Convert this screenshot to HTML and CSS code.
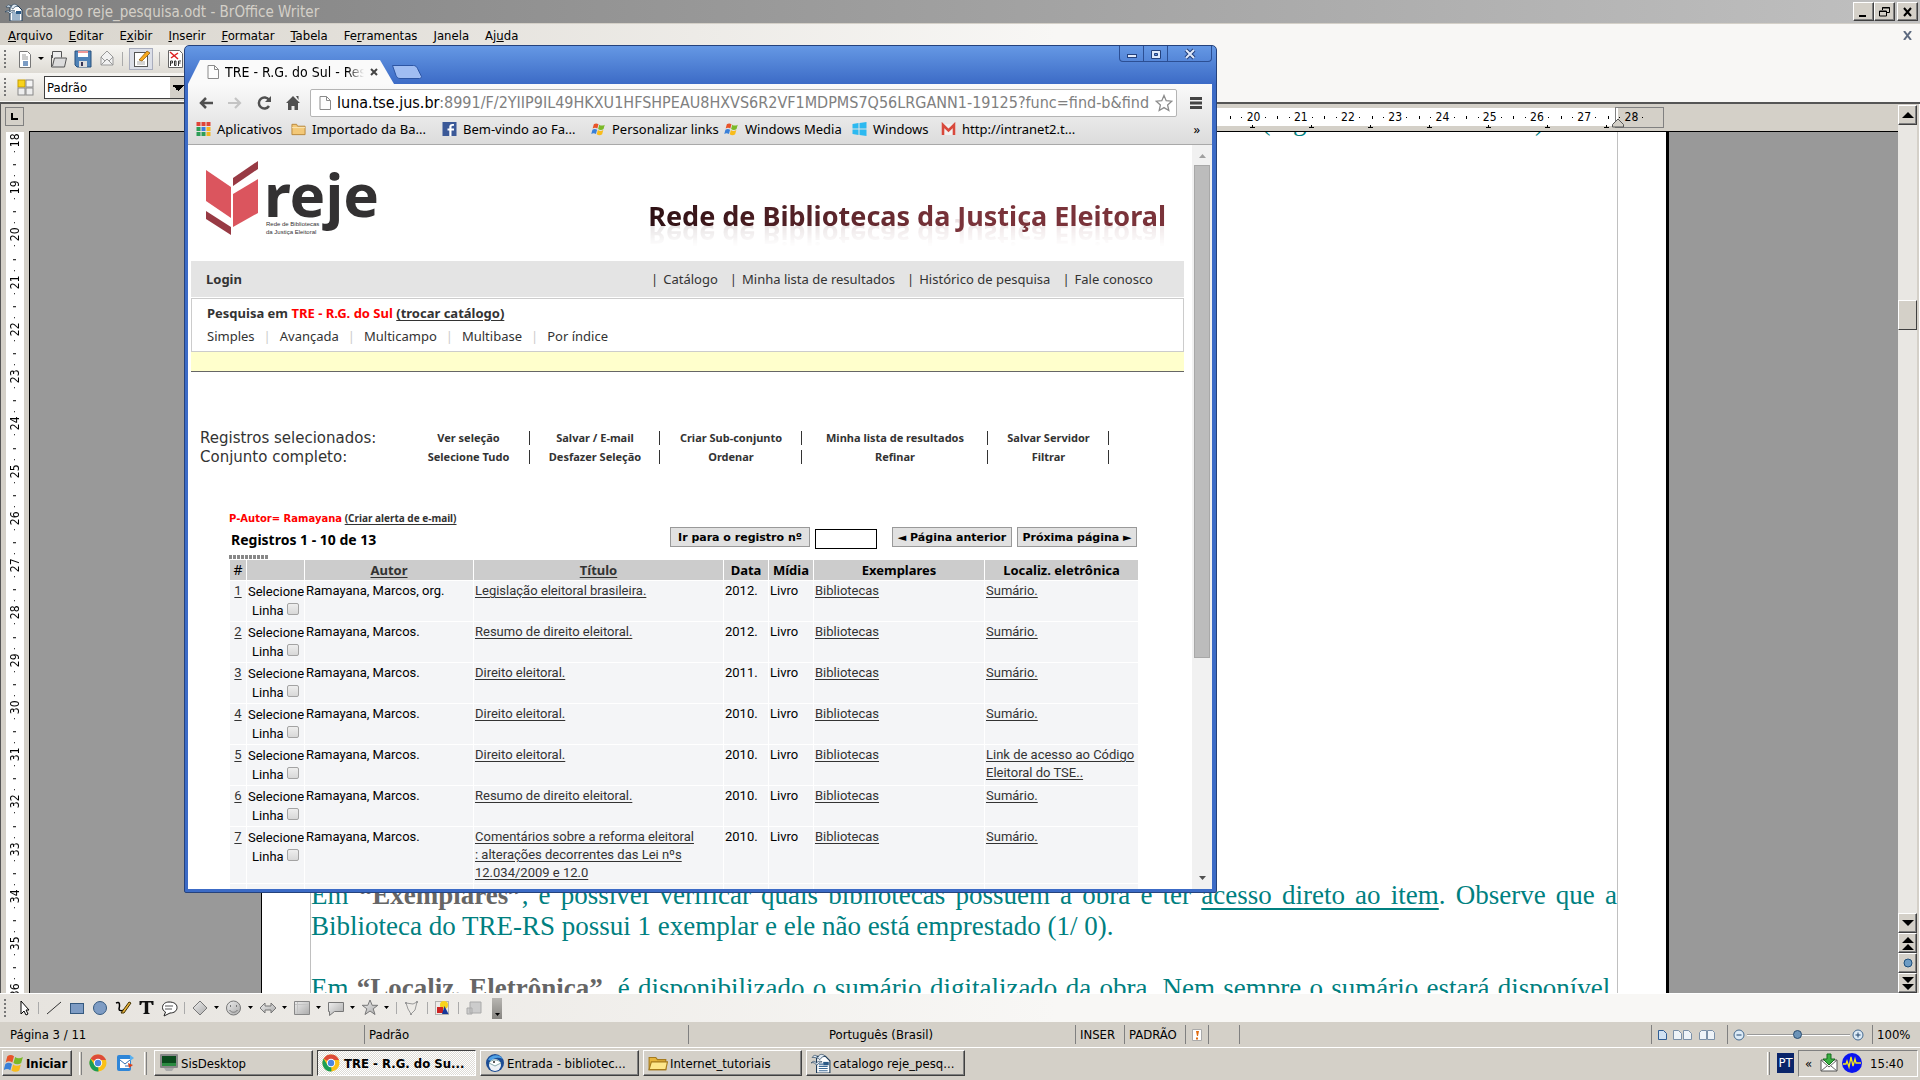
FILE: index.html
```html
<!DOCTYPE html>
<html lang="pt-BR">
<head>
<meta charset="utf-8">
<title>catalogo reje_pesquisa.odt - BrOffice Writer</title>
<link rel="stylesheet" href="styles.css">
</head>
<body>
<svg class="defs" aria-hidden="true">
  <symbol id="i-odt" viewBox="0 0 18 18"><path d="M5 3h8l4 4v11H5z" fill="#fff" stroke="#1d3b58"/><path d="M7 10h4M7 12h8M7 14h8M7 16h8" stroke="#3c6a96"/><rect x="11" y="8" width="5" height="3" fill="#2c5a86"/><path d="M1 4c2-3 4-2 5 0 2-4 5-3 7-1-2 0-4 1-5 3C6 4 3 4 1 4z" fill="#dfe9f2" stroke="#1d3b58" stroke-width=".6"/><path d="M0 9c2-2 3-2 5 0 1-2 3-2 5-1-3 0-3 2-5 3-1-2-3-3-5-2z" fill="#dfe9f2" stroke="#1d3b58" stroke-width=".6"/></symbol>
  <symbol id="i-page" viewBox="0 0 12 14"><path d="M1 .5h6.500L11.500 4.500v9H1z" fill="#fdfdfd" stroke="#8a8a8a"/><path d="M7.500.5v4h4" fill="none" stroke="#8a8a8a"/></symbol>
  <symbol id="i-chrome" viewBox="0 0 18 18"><circle cx="9" cy="9" r="8.500" fill="#fbc116"/><path d="M9 9L1.600 4.750A8.500 8.500 0 0 1 16.400 4.750L17 6H9z" fill="#dd4b39"/><path d="M9 9L9.500 17.500A8.500 8.500 0 0 1 1.600 4.750L5.500 11z" fill="#1b9e55"/><circle cx="9" cy="9" r="4.200" fill="#fff"/><circle cx="9" cy="9" r="3.200" fill="#4b86e0"/></symbol>
  <symbol id="i-flag" viewBox="0 0 18 18"><path d="M3 3c2-1.500 4-1.500 6 0L7.500 8.500c-2-1.500-4-1.500-6 0z" fill="#e8542a"/><path d="M10 3.500c2 1.500 4.500 1.500 7 0L15.500 9c-2 1.500-5 1.500-7 0z" fill="#7bb928"/><path d="M1.200 10c2-1.500 4-1.500 6 0L5.700 15.500c-2-1.500-4-1.500-6 0z" fill="#3a80d8"/><path d="M8.200 10.300c2 1.500 4.500 1.500 7 0l-1.500 5.500c-2 1.500-5 1.500-7 0z" fill="#f8bc1c"/></symbol>
  <symbol id="i-folder" viewBox="0 0 18 16"><path d="M1 3h6l1.500 2H16v9H1z" fill="#e6b53c" stroke="#a57a1c"/><path d="M1 14L3 7h14.500L16 14z" fill="#fde68a" stroke="#a57a1c"/></symbol>
</svg>

<header class="titlebar">
  <svg class="ico18"><use href="#i-odt"/></svg>
  <h1>catalogo reje_pesquisa.odt - BrOffice Writer</h1>
  <div class="winbtns">
    <button aria-label="Minimizar"><svg viewBox="0 0 16 14"><path d="M3 11h7" stroke="#000" stroke-width="2"/></svg></button>
    <button aria-label="Restaurar"><svg viewBox="0 0 16 14"><path d="M5.500 5V2.500h7v5H10M5 3h8" fill="none" stroke="#000"/><path d="M2.500 6h7v5h-7zM2 6.500h8" fill="none" stroke="#000"/></svg></button>
    <button class="gap" aria-label="Fechar"><svg viewBox="0 0 16 14"><path d="M4 3l7 8M11 3l-7 8" stroke="#000" stroke-width="2"/></svg></button>
  </div>
</header>

<nav class="menubar">
  <a href="#"><u>A</u>rquivo</a><a href="#"><u>E</u>ditar</a><a href="#">E<u>x</u>ibir</a><a href="#"><u>I</u>nserir</a><a href="#"><u>F</u>ormatar</a><a href="#"><u>T</u>abela</a><a href="#">Fe<u>r</u>ramentas</a><a href="#"><u>J</u>anela</a><a href="#">Aj<u>u</u>da</a>
  <button class="docclose" aria-label="Fechar documento"><svg viewBox="0 0 9 9"><path d="M1 0l7 9M8 0L1 9" stroke="#5e6b80" stroke-width="2"/></svg></button>
</nav>

<div class="toolbars">
  <div class="toolbar">
    <span class="grip"></span>
    <svg class="tb-new" viewBox="0 0 28 20"><path d="M2.500 2.500h8l3 3v13h-11z" fill="#fff" stroke="#777"/><path d="M5 6h4M5 8h6M5 10h6" stroke="#999"/><rect x="6" y="12" width="5" height="5" fill="#7b9cc4"/><path d="M21 8h6l-3 3z" fill="#000"/></svg>
    <svg viewBox="0 0 18 20"><path d="M2.500 9V2.500h9v6" fill="#eee" stroke="#555"/><path d="M1.500 6v12h13l2-9h-12l-2 8" fill="#dcdcdc" stroke="#555"/></svg>
    <svg viewBox="0 0 18 20"><path d="M1 2h16v16H3l-2-2z" fill="#4f83b8" stroke="#28517c"/><rect x="4" y="2" width="10" height="6" fill="#fff"/><path d="M4 3h10" stroke="#d33"/><rect x="5" y="12" width="8" height="6" fill="#ddd"/><rect x="7" y="13" width="2" height="4" fill="#335"/></svg>
    <svg viewBox="0 0 18 20"><path d="M3 8l6-6 6 6v8H3z" fill="#f1f1f1" stroke="#999"/><path d="M3 16l6-6 6 6M3 8l4 4M15 8l-4 4" fill="none" stroke="#999"/></svg>
    <span class="sep"></span>
    <span class="pressed"><svg viewBox="0 0 18 20"><rect x="2.500" y="3.500" width="13" height="14" fill="#fff" stroke="#555"/><path d="M5 13h8M5 15h8" stroke="#aaa"/><path d="M7 11l8-9 3 2-8 8z" fill="#f7a81c" stroke="#8a5200" stroke-width=".7"/></svg></span>
    <span class="sep"></span>
    <svg viewBox="0 0 18 20"><path d="M2.500 1.500h11l3 3v14h-14z" fill="#fff" stroke="#666"/><path d="M4 3l8 7M12 4L5 9" stroke="#d22" stroke-width="1.500"/><path d="M4.500 17v-5h2v2h-2M8.500 12v4.500h1.500V12zM12.500 17v-5h2.500M12.500 14h2" fill="none" stroke="#333"/></svg>
  </div>
  <div class="toolbar">
    <span class="grip"></span>
    <svg class="tb-style" viewBox="0 0 18 20"><rect x="1" y="3" width="7" height="7" fill="#f8d31c" stroke="#c59d00"/><rect x="9" y="3" width="7" height="7" fill="#f4f4f4" stroke="#888"/><rect x="1" y="11" width="7" height="7" fill="#eee" stroke="#888"/><rect x="9" y="11" width="7" height="7" fill="#eee" stroke="#888"/></svg>
    <label class="combo" for="style"><span class="sr">Estilo</span><select id="style"><option>Padrão</option></select></label>
  </div>
</div>

<main class="work">
  <div class="canvas">
    <div class="hruler">
      <button class="corner" aria-label="Tipo de tabulação"><svg viewBox="0 0 7 7"><path d="M1 0v6h6" fill="none" stroke="#000" stroke-width="2"/></svg></button>
      <div class="hscale"><ol><li>20</li><li>21</li><li>22</li><li>23</li><li>24</li><li>25</li><li>26</li><li>27</li><li>28</li></ol>
        <svg class="indent" viewBox="0 0 14 10"><path d="M7 1l5.500 5.500v2.500h-11V6.500z" fill="#d4d0c8" stroke="#555"/></svg></div>
    </div>
    <div class="body">
      <div class="vruler"><ol><li>18</li><li>19</li><li>20</li><li>21</li><li>22</li><li>23</li><li>24</li><li>25</li><li>26</li><li>27</li><li>28</li><li>29</li><li>30</li><li>31</li><li>32</li><li>33</li><li>34</li><li>35</li><li>36</li></ol></div>
      <div class="desk">
        <article class="sheet">
          <div class="text">
            <p class="top"><span>página</span><span>(Figura</span><span class="end">)</span></p>
            <div>
              <p>Em <b>“Exemplares”</b>, é possível verificar quais bibliotecas possuem a obra e ter <u>acesso direto ao item</u>. Observe que a Biblioteca do TRE-RS possui 1 exemplar e ele não está emprestado (1/ 0).</p>
              <p class="full">Em <b>“Localiz. Eletrônica”</b>, é disponibilizado o sumário digitalizado da obra. Nem sempre o sumário estará disponível,</p>
            </div>
          </div>
        </article>
      </div>
    </div>
  </div>
  <div class="vscroll">
    <button aria-label="Para cima"><svg viewBox="0 0 12 6"><path d="M6 0l6 6H0z"/></svg></button>
    <div class="track"><span class="thumb"></span></div>
    <button aria-label="Para baixo"><svg viewBox="0 0 12 6"><path d="M6 6l6-6H0z"/></svg></button>
    <button aria-label="Página anterior"><svg viewBox="0 0 12 13"><path d="M6 0l6 6H0zM6 7l6 6H0z"/></svg></button>
    <button aria-label="Navegação"><svg viewBox="0 0 12 12"><circle cx="6" cy="6" r="4" fill="#6d9cc4" stroke="#1d4f7c"/></svg></button>
    <button aria-label="Próxima página"><svg viewBox="0 0 12 13"><path d="M6 6l6-6H0zM6 13l6-6H0z"/></svg></button>
  </div>
</main>

<div class="drawbar">
  <span class="grip"></span>
  <svg class="draw" viewBox="0 0 500 28" preserveAspectRatio="xMinYMid">
    <defs><linearGradient id="g" x1="0" y1="0" x2="1" y2="1"><stop offset="0" stop-color="#eee"/><stop offset="1" stop-color="#aaa"/></linearGradient></defs>
    <path d="M21 7v13l3-3 2 4 2-1-2-4h3z" fill="#fff" stroke="#000"/>
    <path d="M47 20L61 8" stroke="#333"/>
    <rect x="70.500" y="9.500" width="13" height="10" fill="#7e9cc4" stroke="#35597f"/>
    <circle cx="100" cy="14" r="6.500" fill="#7e9cc4" stroke="#35597f"/>
    <path d="M116 9c4-2 4 2 3 6 0 2 3 2 5 1" fill="none" stroke="#000" stroke-width="1.500"/><path d="M121 19l8-11 2 1-7 10z" fill="#e8b23a" stroke="#403000"/>
    <path d="M139.500 7v4h1.500l1-2.500h2.800v10l-2 1.500h7.400l-2-1.500v-10h2.800l1 2.500h1.500V7z" fill="#111"/>
    <path d="M169 8c5 0 8 2 8 5.500s-3 5.500-7 5.500l-6 3 1.500-4c-2-1-3-2.500-3-4.500 0-3.500 3-5.500 6.500-5.500z" fill="#fff" stroke="#222"/><path d="M165 12h8M165 15h7" stroke="#555"/>
    <path d="M200 7l7 7-7 7-7-7z" fill="url(#g)" stroke="#777"/>
    <circle cx="233.500" cy="14" r="7" fill="url(#g)" stroke="#777"/><path d="M230.500 11v2M236.500 11v2M229.500 16c2 3 6 3 8 0" stroke="#777" fill="none"/>
    <path d="M260 14l5-5v3h6V9l5 5-5 5v-3h-6v3z" fill="url(#g)" stroke="#777"/>
    <path d="M294.500 7.500h15v13h-15z" fill="url(#g)" stroke="#888"/><path d="M297.500 8v12M295 10.500h14" stroke="#c4c4c4"/>
    <path d="M328.500 8.500h15v9h-9l-5 4v-4h-1z" fill="url(#g)" stroke="#777"/>
    <path d="M370 6l2.200 5.300h5.600l-4.600 3.500 1.800 5.700-5-3.500-5 3.500 1.800-5.700-4.600-3.500h5.600z" fill="url(#g)" stroke="#777"/>
    <path d="M406 9l7 1 4-2-2 8-4 4-3-5z" fill="none" stroke="#999"/><path d="M405 8h2v2h-2zM416 7h2v2h-2zM410 19h2v2h-2z" fill="#999"/>
    <rect x="435.500" y="7.500" width="13" height="13" fill="none" stroke="#777" stroke-dasharray="1 1"/><circle cx="444" cy="11" r="4" fill="#f8d31c"/><rect x="437" y="13" width="6" height="6" fill="#c22"/><path d="M442 20l2.500-8 4 8z" fill="#16389a"/>
    <path d="M470 8h11v11h-11zM467 14h5v6h-5z" fill="#ccc" stroke="#aaa"/>
    <path d="M214 12h5l-2.500 3zM248 12h5l-2.500 3zM282 12h5l-2.500 3zM316 12h5l-2.500 3zM350 12h5l-2.500 3zM384 12h5l-2.500 3z"/>
    <path d="M38.500 8v12M184.500 8v12M396.500 8v12M427.500 8v12M458.500 8v12" stroke="#aaa"/>
  </svg>
  <button class="more" aria-label="Mais botões"><svg viewBox="0 0 5 3"><path d="M0 0h5L2.500 3z"/></svg></button>
</div>

<footer class="status">
  <span class="s1">Página 3 / 11</span><span class="s2">Padrão</span><span class="s3">Português (Brasil)</span><span class="s4">INSER</span><span class="s5">PADRÃO</span>
  <span class="s6"><svg class="ico14" viewBox="0 0 14 14"><path d="M2.500 1.500h9v11h-9z" fill="#fff" stroke="#aaa"/><path d="M6 3h3l-1 5H7zM6 9.500h2v2H6z" fill="#e06c10"/></svg></span><span class="s7"></span><span class="s8"></span>
  <span class="views"><svg viewBox="0 0 62 14"><path d="M2.500 2.500h5l3 3v6h-8z" fill="#cfe0f2" stroke="#2f5d94"/><path d="M17.500 2.500h5l3 3v6h-8zM27.500 2.500h5l3 3v6h-8zM43.500 4.500l2-2h5v9h-7zM51.500 2.500h5l2 2v7h-7z" fill="#eef3f8" stroke="#7b90a8"/></svg></span>
  <span class="zoom">
    <svg class="ico14" viewBox="0 0 14 14"><circle cx="7" cy="7" r="5" fill="#dceaf6" stroke="#44698f"/><path d="M4.500 7h5" stroke="#22476e"/></svg>
    <label class="sr" for="z">Zoom</label><input id="z" type="range" min="20" max="180" value="98">
    <svg class="ico14" viewBox="0 0 14 14"><circle cx="7" cy="7" r="5" fill="#dceaf6" stroke="#44698f"/><path d="M4.500 7h5M7 4.500v5" stroke="#22476e"/></svg>
  </span>
  <span class="pct">100%</span>
</footer>

<nav class="taskbar">
  <button class="start"><svg class="ico20"><use href="#i-flag"/></svg>Iniciar</button>
  <span class="tsep"></span>
  <a class="ql" href="#" aria-label="Chrome"><svg class="ico18"><use href="#i-chrome"/></svg></a>
  <a class="ql" href="#" aria-label="Outlook"><svg class="ico20" viewBox="0 0 20 20"><rect x="2" y="2" width="14" height="16" rx="2" fill="#2f86d8"/><rect x="5" y="6" width="10" height="9" fill="#fff"/><path d="M5 7l5 4 5-4M10 13h6" fill="none" stroke="#2f6cb0"/><path d="M15 2l4 3-4 3z" fill="#58b0f0"/><path d="M13 10l5 2-4 3z" fill="#d8401c"/></svg></a>
  <span class="tsep"></span>
  <div class="tasks">
    <button><svg class="ico20" viewBox="0 0 20 20"><rect x="1" y="1" width="18" height="14" rx="1" fill="#888"/><rect x="3" y="3" width="14" height="10" fill="#0a4a1c"/><path d="M3 10h14v3H3z" fill="#2a8a40"/><path d="M5 15h10l-2 3H7z" fill="#aaa"/></svg>SisDesktop</button>
    <button class="on"><svg class="ico18"><use href="#i-chrome"/></svg>TRE - R.G. do Su...</button>
    <button><svg class="ico20" viewBox="0 0 20 20"><circle cx="10" cy="10" r="9" fill="#1c4c94"/><path d="M3 7c3-6 12-6 15-1-4-2-9-2-11 2z" fill="#4fa0e4"/><circle cx="10" cy="12" r="6" fill="#eef2f6"/><path d="M4 10c3-4 9-4 12 0l-6 3z" fill="#fff" stroke="#8aa"/><circle cx="9" cy="9" r="1" fill="#222"/></svg>Entrada - bibliotec...</button>
    <button><svg class="ico20"><use href="#i-folder"/></svg>Internet_tutoriais</button>
    <button><svg class="ico20"><use href="#i-odt"/></svg>catalogo reje_pesq...</button>
  </div>
  <span class="tsep"></span>
  <span class="lang">PT</span>
  <div class="tray"><span class="chev">«</span><svg class="ico20" viewBox="0 0 20 20"><path d="M2 7h16v11H2z" fill="#fff" stroke="#555"/><path d="M2 7l8 7 8-7M2 18l6-5M18 18l-6-5" fill="none" stroke="#666"/><path d="M8 1h4v5h4l-6 6-6-6h4z" fill="#3cb043" stroke="#156c1e"/></svg><svg class="ico20" viewBox="0 0 20 20"><circle cx="10" cy="10" r="10" fill="#0a14f0"/><path d="M1 11h3l1-3 2 6 2-10 2 9 2-7 1 4h5" fill="none" stroke="#f6e71c" stroke-width="1.300"/></svg><time>15:40</time></div>
</nav>

<section class="chrome">
  <div class="strip">
    <div class="tab"><svg class="pageico"><use href="#i-page"/></svg><span>TRE - R.G. do Sul - Resultados</span><button aria-label="Fechar guia"><svg viewBox="0 0 8 8"><path d="M1 1l6 6M7 1L1 7" stroke="#444" stroke-width="2"/></svg></button></div>
    <button class="newtab" aria-label="Nova guia"><svg viewBox="0 0 32 16"><path d="M1.500 1.500h21c2 0 3 1 4 3l4 8c0 1-1 2-2 2H9c-2 0-3-1-4-3z" fill="#a0bdf2" stroke="#2c55a4"/></svg></button>
    <div class="cbtns">
      <button aria-label="Minimizar"><svg viewBox="0 0 14 12"><rect x="2.500" y="6.500" width="9" height="3" fill="#dfe9fb" stroke="#24417c"/></svg></button>
      <button aria-label="Maximizar"><svg viewBox="0 0 14 12"><path d="M2.500 2.500h9v8h-9zM5.500 5.500h3v2h-3z" fill="#dfe9fb" fill-rule="evenodd" stroke="#24417c"/></svg></button>
      <button class="wide" aria-label="Fechar"><svg viewBox="0 0 14 12"><path d="M3 2l8 8M11 2l-8 8" stroke="#24417c" stroke-width="4"/><path d="M3 2l8 8M11 2l-8 8" stroke="#dfe9fb" stroke-width="2"/></svg></button>
    </div>
  </div>
  <div class="ctools">
    <div class="addr">
      <button aria-label="Voltar"><svg viewBox="0 0 16 16"><path d="M15 8H3M8 3L3 8l5 5" fill="none" stroke="#505050" stroke-width="2.500"/></svg></button>
      <button aria-label="Avançar"><svg viewBox="0 0 16 16"><path d="M1 8h12M8 3l5 5-5 5" fill="none" stroke="#c4c4c4" stroke-width="2.200"/></svg></button>
      <button aria-label="Recarregar"><svg viewBox="0 0 16 16"><path d="M13 11a5.500 5.500 0 1 1 0-6" fill="none" stroke="#505050" stroke-width="2.500"/><path d="M15 1v6H9z" fill="#505050"/></svg></button>
      <button aria-label="Página inicial"><svg viewBox="0 0 16 16"><path d="M8 1l7 7h-2v7H9.500v-4h-3v4H3V8H1zM11 1h2.500v4z" fill="#505050"/></svg></button>
      <div class="url"><svg class="pageico"><use href="#i-page"/></svg><span class="urltext"><b>luna.tse.jus.br</b>:8991/F/2YIIP9IL49HKXU1HFSHPEAU8HXVS6R2VF1MDPMS7Q56LRGANN1-19125?func=find-b&amp;find</span><svg class="ico18" viewBox="0 0 18 18"><path d="M9 1.500l2.200 5.200 5.600.5-4.200 3.700 1.200 5.600L9 13.600l-4.800 2.900 1.200-5.600L1.200 7.200l5.600-.5z" fill="#fff" stroke="#8c8c8c" stroke-width="1.300"/></svg></div>
      <button aria-label="Menu"><svg viewBox="0 0 16 16"><path d="M2 3.500h12M2 8h12M2 12.500h12" stroke="#444" stroke-width="3"/></svg></button>
    </div>
    <nav class="marks">
      <a class="m1" href="#"><svg viewBox="0 0 14 14"><path d="M0 0h4v4H0zM5 0h4v4H5zM10 0h4v4h-4z" fill="#e0453a"/><path d="M0 5h4v4H0zM0 10h4v4H0zM5 10h4v4H5z" fill="#2e9e58"/><path d="M5 5h4v4H5z" fill="#3a7de0"/><path d="M10 5h4v4h-4zM10 10h4v4h-4z" fill="#f2b620"/></svg>Aplicativos</a>
      <a class="m2" href="#"><svg viewBox="0 0 16 14"><path d="M1 2h5l1 2h8v9H1z" fill="#f3c877" stroke="#b8863a"/><path d="M1 5.500h14" stroke="#fbe6b8"/></svg>Importado da Ba...</a>
      <a class="m3" href="#"><svg viewBox="0 0 14 14"><rect width="14" height="14" fill="#3b5998"/><path d="M9 14V8.500h2.500V6.500H9V5c0-1 .5-1.200 2.500-1.200V2C8 1.500 6.800 3 6.800 4.800v1.700H5v2h1.800V14z" fill="#fff"/></svg>Bem-vindo ao Fa...</a>
      <a class="m4" href="#"><svg><use href="#i-flag"/></svg>Personalizar links</a>
      <a class="m5" href="#"><svg><use href="#i-flag"/></svg>Windows Media</a>
      <a class="m6" href="#"><svg viewBox="0 0 14 14"><path d="M0 2l6-1v5.500H0zM7 1l7-1v6.500H7zM0 7.500h6V13l-6-1zM7 7.500h7V14l-7-1z" fill="#2cb9f0"/></svg>Windows</a>
      <a class="m7" href="#"><svg viewBox="0 0 14 14"><path d="M0 2h14v11H0z" fill="#f0f0f0"/><path d="M1.500 13V3L7 8.500 12.500 3v10" fill="none" stroke="#d8493c" stroke-width="2.600"/></svg>http://intranet2.t...</a>
      <button class="over" aria-label="Mais favoritos">»</button>
    </nav>
  </div>
  <div class="view">
    <div class="site">
      <div class="brand">
        <svg class="logo" viewBox="0 0 176 80" role="img" aria-label="reje">
          <path d="M0 9l25 17v31L0 40z" fill="#db555e"/><path d="M52 18v34L27 66V33z" fill="#db555e"/><path d="M52 0v8L27 25v-8z" fill="#983a44"/><path d="M0 50l25 16v8L0 58z" fill="#983a44"/>
          <text class="lg" x="58" y="56">reje</text><text class="sm" x="60" y="65">Rede de Bibliotecas</text><text class="sm" x="60" y="73">da Justiça Eleitoral</text>
        </svg>
        <h2>Rede de Bibliotecas da Justiça Eleitoral</h2>
      </div>
      <nav class="grey"><a href="#"><b>Login</b></a><span class="links"><a href="#">Catálogo</a><a href="#">Minha lista de resultados</a><a href="#">Histórico de pesquisa</a><a href="#">Fale conosco</a></span></nav>
      <div class="search">
        <p><b>Pesquisa em <em>TRE - R.G. do Sul</em> <a href="#">(trocar catálogo)</a></b></p>
        <nav><a href="#">Simples</a><a href="#">Avançada</a><a href="#">Multicampo</a><a href="#">Multibase</a><a href="#">Por índice</a></nav>
      </div>
      <div class="yellow"></div>
      <table class="actions">
        <tr><th scope="row">Registros selecionados:</th><td class="a1"><a href="#">Ver seleção</a></td><td class="a2"><a href="#">Salvar / E-mail</a></td><td class="a3"><a href="#">Criar Sub-conjunto</a></td><td class="a4"><a href="#">Minha lista de resultados</a></td><td class="a5"><a href="#">Salvar Servidor</a></td></tr>
        <tr><th scope="row">Conjunto completo:</th><td><a href="#">Selecione Tudo</a></td><td><a href="#">Desfazer Seleção</a></td><td><a href="#">Ordenar</a></td><td><a href="#">Refinar</a></td><td><a href="#">Filtrar</a></td></tr>
      </table>
      <div class="results">
        <p class="alert"><em>P-Autor= Ramayana</em> <a href="#">(Criar alerta de e-mail)</a></p>
        <form class="pager"><strong>Registros 1 - 10 de 13</strong>
          <button type="button">Ir para o registro nº</button><input type="text" aria-label="Registro nº">
          <button type="button" class="prev">◄ Página anterior</button><button type="button">Próxima página ►</button></form>
        <div class="zig"></div>
        <table class="grid">
          <colgroup><col class="c1"><col class="c2"><col class="c3"><col class="c4"><col class="c5"><col class="c6"><col class="c7"><col class="c8"></colgroup>
          <thead><tr><th class="n">#</th><th></th><th><a href="#">Autor</a></th><th><a href="#">Título</a></th><th>Data</th><th>Mídia</th><th>Exemplares</th><th>Localiz. eletrônica</th></tr></thead>
          <tbody>
            <tr><td><a href="#">1</a></td><td><label>Selecione Linha <input type="checkbox"></label></td><td>Ramayana, Marcos, org.</td><td><a href="#">Legislação eleitoral brasileira.</a></td><td>2012.</td><td>Livro</td><td><a href="#">Bibliotecas</a></td><td><a href="#">Sumário.</a></td></tr>
            <tr><td><a href="#">2</a></td><td><label>Selecione Linha <input type="checkbox"></label></td><td>Ramayana, Marcos.</td><td><a href="#">Resumo de direito eleitoral.</a></td><td>2012.</td><td>Livro</td><td><a href="#">Bibliotecas</a></td><td><a href="#">Sumário.</a></td></tr>
            <tr><td><a href="#">3</a></td><td><label>Selecione Linha <input type="checkbox"></label></td><td>Ramayana, Marcos.</td><td><a href="#">Direito eleitoral.</a></td><td>2011.</td><td>Livro</td><td><a href="#">Bibliotecas</a></td><td><a href="#">Sumário.</a></td></tr>
            <tr><td><a href="#">4</a></td><td><label>Selecione Linha <input type="checkbox"></label></td><td>Ramayana, Marcos.</td><td><a href="#">Direito eleitoral.</a></td><td>2010.</td><td>Livro</td><td><a href="#">Bibliotecas</a></td><td><a href="#">Sumário.</a></td></tr>
            <tr><td><a href="#">5</a></td><td><label>Selecione Linha <input type="checkbox"></label></td><td>Ramayana, Marcos.</td><td><a href="#">Direito eleitoral.</a></td><td>2010.</td><td>Livro</td><td><a href="#">Bibliotecas</a></td><td><a href="#">Link de acesso ao Código<br>Eleitoral do TSE..</a></td></tr>
            <tr><td><a href="#">6</a></td><td><label>Selecione Linha <input type="checkbox"></label></td><td>Ramayana, Marcos.</td><td><a href="#">Resumo de direito eleitoral.</a></td><td>2010.</td><td>Livro</td><td><a href="#">Bibliotecas</a></td><td><a href="#">Sumário.</a></td></tr>
            <tr><td><a href="#">7</a></td><td><label>Selecione Linha <input type="checkbox"></label></td><td>Ramayana, Marcos.</td><td><a href="#">Comentários sobre a reforma eleitoral<br>: alterações decorrentes das Lei nºs<br>12.034/2009 e 12.0</a></td><td>2010.</td><td>Livro</td><td><a href="#">Bibliotecas</a></td><td><a href="#">Sumário.</a></td></tr>
            <tr><td></td><td></td><td></td><td></td><td></td><td></td><td></td><td></td></tr>
          </tbody>
        </table>
      </div>
    </div>
    <div class="cscroll"><svg viewBox="0 0 7 4"><path d="M3.500 0L7 4H0z" fill="#a0a0a0"/></svg><div class="ctrack"><span></span></div><svg viewBox="0 0 7 4"><path d="M3.500 4L7 0H0z" fill="#505050"/></svg></div>
  </div>
</section>
</body>
</html>
```
FILE: styles.css
```css
* { box-sizing: border-box; }
:root { --ui: "DejaVu Sans Condensed", "Noto Sans", sans-serif; --web: "Noto Sans", sans-serif; --face: #d4d0c8; }
body { margin: 0; height: 100vh; display: flex; flex-direction: column; position: relative; overflow: hidden; background: var(--face); font: 13px var(--ui); color: #000; }
a { color: inherit; text-decoration: none; }
button { padding: 0; margin: 0; font: inherit; color: inherit; border: 0; background: none; }
h1, h2, p, ol { margin: 0; padding: 0; font: inherit; }
ol { list-style: none; }
.defs { position: absolute; width: 0; height: 0; }
.sr { position: absolute; width: 1px; height: 1px; overflow: hidden; clip-path: inset(50%); }
.ico14 { width: 14px; height: 14px; }
.ico18 { width: 18px; height: 18px; flex: none; }
.ico20 { width: 20px; height: 20px; flex: none; }
.pageico { width: 12px; height: 14px; flex: none; }

/* Writer frame */
.titlebar { height: 24px; flex: none; display: flex; align-items: center; gap: 2px; padding: 0 2px 0 5px; border-bottom: 1px solid #d4d0c8; background: linear-gradient(90deg, #808080, #c0c0c0); }
.titlebar h1 { flex: 1; font-size: 15px; color: #d4d0c8; }
.winbtns { display: flex; }
.winbtns button { width: 21px; height: 19px; background: var(--face); border: 1px solid; border-color: #fff #404040 #404040 #fff; box-shadow: inset -1px -1px #808080; }
.winbtns .gap { margin-left: 2px; }
.winbtns svg { width: 16px; height: 14px; display: block; margin: 1px auto; }
.menubar { height: 21px; flex: none; display: flex; align-items: center; gap: 16px; padding: 1px 8px 0; background: linear-gradient(90deg, #d8d4cc, #f8f7f5 55%); }
.docclose { margin-left: auto; }
.docclose svg { width: 9px; height: 9px; display: block; }
.toolbars { height: 59px; flex: none; background: #f8f7f5; border-bottom: 2px solid #555; display: flex; flex-direction: column; }
.toolbar { height: 28px; width: 25%; display: flex; align-items: center; gap: 6px; padding-left: 4px; background: linear-gradient(#f6f5f2, #dedbd4); }
.toolbar svg { width: 18px; height: 20px; flex: none; }
.toolbar .tb-new { width: 28px; margin: 0 -1px 0 5px; }
.toolbar .tb-style { margin: 0 3px 0 5px; }
.grip { width: 2px; height: 18px; flex: none; background: repeating-linear-gradient(#777 0 2px, transparent 2px 4px); }
.sep { width: 1px; height: 14px; background: #aaa; }
.pressed { padding: 0 2px; height: 22px; background: #dcdfe8; border: 1px solid #a9adbd; display: flex; align-items: center; }
.combo { flex: none; }
.combo select { width: 144px; height: 23px; padding: 0 2px; font: 13px/19px var(--ui); color: #000; border: 1px solid #404040; border-radius: 0; appearance: none; background: linear-gradient(to bottom left, #000 50%, transparent 50%) 127px 8px / 6px 6px no-repeat, linear-gradient(to bottom right, #000 50%, transparent 50%) 133px 8px / 6px 6px no-repeat, linear-gradient(var(--face), var(--face)) 125px 0 / 20px 23px no-repeat, #fff; }

/* Work area */
.work { flex: 1; min-height: 0; display: flex; padding-left: 1px; border-left: 1px solid #555; }
.canvas { flex: 1; min-width: 0; display: flex; flex-direction: column; }
.hruler { height: 27px; flex: none; display: flex; justify-content: space-between; padding: 3px 234px 0 3px; }
.corner { width: 19px; height: 19px; border: 1px solid #808080; }
.corner svg { width: 7px; height: 7px; display: block; margin: auto; }
.hscale { position: relative; height: 21px; width: 75%; background: linear-gradient(#fff, #fff) 0 1px / calc(100% - 46px) 18px no-repeat; }
.hscale::after { content: ""; position: absolute; right: 0; top: 0; width: 47px; height: 19px; border: 1px solid #808080; }
.hscale::before { content: ""; position: absolute; left: 0; right: 55px; bottom: 0; height: 3px; background: repeating-linear-gradient(270deg, transparent 0 2px, #000 2px 3px, transparent 3px 59px) 0 0 / 100% 2px no-repeat, repeating-linear-gradient(270deg, #000 0 5px, transparent 5px 59px) 0 2px / 100% 1px no-repeat; }
.hscale ol { display: flex; justify-content: flex-end; padding-right: 9px; line-height: 20px; }
.hscale li { width: 1.25cm; flex: none; text-align: center; font-size: 12px; background: linear-gradient(#000, #000) 25% 10px / 1px 1px no-repeat, linear-gradient(#000, #000) 75% 10px / 1px 1px no-repeat, linear-gradient(#000, #000) 0 9px / 1px 3px no-repeat; }
.indent { position: absolute; right: 39px; bottom: 0; width: 14px; height: 10px; z-index: 1; }
.body { flex: 1; min-height: 0; display: flex; }
.vruler { width: 18px; flex: none; margin: 1px 5px 0 4px; background: #fff; overflow: hidden; }
.vruler ol { margin-top: -15px; }
.vruler li { height: 1.25cm; width: 18px; writing-mode: vertical-rl; rotate: 180deg; text-align: center; line-height: 18px; font-size: 12px; background: linear-gradient(#000, #000) 9px 25% / 1px 1px no-repeat, linear-gradient(#000, #000) 9px 75% / 1px 1px no-repeat, linear-gradient(#000, #000) 8px 100% / 3px 1px no-repeat; }
.desk { flex: 1; min-width: 0; background: #999; border: solid #000; border-width: 1px 0 0 1px; display: flex; overflow: hidden; }
.sheet { flex: 1; margin: 0 229px 0 231px; background: #fff; border: solid #000; border-width: 0 3px 0 1px; padding: 0 48px; display: flex; }
.text { flex: 1; min-width: 0; display: flex; flex-direction: column; justify-content: space-between; margin: -26px 0 -11px; border: solid #c0c0c0; border-width: 0 1px; font: 27px "Liberation Serif", serif; line-height: 31px; color: #008080; text-align: justify; }
.text b { color: #666; }
.text .top { display: flex; gap: 14px; justify-content: flex-end; padding-right: 73px; }
.text .end { width: 189px; text-align: right; }
.text .full { margin-top: 31px; text-align-last: justify; }
.text u { text-underline-offset: 4px; text-decoration-thickness: 2px; }
.vscroll { width: 22px; flex: none; padding: 1px 2px 0 0; display: flex; flex-direction: column; border-right: 1px solid #fff; }
.vscroll button { height: 20px; flex: none; background: var(--face); border: 1px solid; border-color: #fff #404040 #404040 #fff; display: flex; align-items: center; justify-content: center; box-shadow: inset -1px -1px #808080; }
.vscroll svg { width: 12px; }
.track { flex: 1; background: #e9e7e3; padding-top: 175px; }
.thumb { display: block; height: 30px; background: var(--face); border: 1px solid; border-color: #fff #404040 #404040 #fff; }

/* Drawing, status and task bars */
.drawbar { height: 29px; flex: none; display: flex; align-items: center; padding-left: 4px; border-top: 1px solid #fff; background: linear-gradient(90deg, #e6e3de, #f8f7f5 55%); }
.draw { width: 500px; height: 28px; margin: 0 -14px 0 -6px; }
.more { width: 10px; height: 21px; margin-left: 6px; background: linear-gradient(#b8b6b2, #868480); display: flex; align-items: flex-end; justify-content: center; padding-bottom: 3px; }
.more svg { width: 5px; height: 3px; }
.status { height: 25px; flex: none; display: flex; align-items: center; }
.status > span { height: 19px; display: flex; align-items: center; border-left: 1px solid #808080; padding-left: 4px; }
.status > .s1 { width: 364px; border: 0; padding-left: 10px; }
.s2 { width: 324px; }
.s3 { width: 387px; justify-content: center; }
.status > .s3 { padding-right: 6px; }
.s4 { width: 49px; }
.s5 { width: 61px; }
.s6 { width: 23px; }
.s7 { width: 31px; }
.s8 { flex: 1; }
.views { width: 76px; }
.views svg { width: 62px; height: 14px; }
.zoom { width: 145px; gap: 1px; }
.pct { width: 48px; }
.zoom input { width: 103px; height: 14px; margin: 0; appearance: none; background: linear-gradient(#999, #999) 0 6px / 100% 1px no-repeat, linear-gradient(#fff, #fff) 0 7px / 100% 1px no-repeat; }
.zoom input::-webkit-slider-thumb { appearance: none; width: 9px; height: 9px; border-radius: 50%; background: #6d94b8; border: 1px solid #2b4d70; }
.taskbar { height: 33px; flex: none; display: flex; align-items: center; gap: 4px; padding: 0 2px 2px; border-top: 1px solid #fff; }
.taskbar button { display: flex; align-items: center; gap: 2px; height: 26px; padding-left: 4px; text-align: left; white-space: nowrap; border: 1px solid; border-color: #fff #404040 #404040 #fff; box-shadow: inset -1px -1px #808080; background: var(--face); }
.taskbar .start { width: 70px; padding-left: 1px; font-weight: bold; }
.tsep { width: 3px; height: 23px; margin: 0 3px; border: solid; border-width: 0 1px; border-color: #fff #808080 #808080 #fff; }
.ql { display: flex; width: 22px; }
.tasks { flex: 1; display: flex; gap: 4px; }
.tasks button { width: 159px; }
.tasks .on { font-weight: bold; gap: 4px; border-color: #404040 #fff #fff #404040; box-shadow: none; background: repeating-conic-gradient(#fff 0 25%, #dedbd5 0 50%) 0 0 / 2px 2px; }
.lang { width: 17px; height: 20px; line-height: 20px; text-align: center; background: #0a246a; color: #fff; }
.tray { width: 120px; height: 27px; display: flex; align-items: center; gap: 3px; padding-left: 6px; border: 1px solid; border-color: #808080 #fff #fff #808080; }
.tray .chev { width: 11px; }
.tray time { margin-left: 5px; }

/* Browser window floating over the document */
.chrome { position: absolute; left: 184px; right: 703px; top: 45px; bottom: 187px; display: flex; flex-direction: column; border: 1px solid #25427c; border-radius: 5px 5px 2px 2px; padding: 0 4px 3px 3px; background: linear-gradient(#6598e4, #3c6bc6 38px); overflow: hidden; }
.strip { height: 38px; flex: none; display: flex; align-items: flex-end; }
.tab { width: 206px; height: 24px; display: flex; align-items: center; gap: 6px; padding: 0 16px 0 19px; background: #fafafa; clip-path: polygon(12px 0, 192px 0, 100% 100%, 0 100%); font-size: 14px; }
.tab span { flex: 1; white-space: nowrap; overflow: hidden; mask: linear-gradient(90deg, #000 88%, transparent); }
.tab button svg { width: 8px; height: 8px; display: block; }
.newtab { width: 32px; height: 16px; margin-bottom: 4px; margin-left: -3px; }
.newtab svg { width: 32px; height: 16px; display: block; }
.cbtns { margin-left: auto; align-self: flex-start; display: flex; height: 16px; border: 1px solid #2c4f94; border-top: 0; border-radius: 0 0 4px 4px; }
.cbtns button { width: 24px; border-right: 1px solid #2c4f94; }
.cbtns .wide { width: 43px; border: 0; }
.cbtns svg { width: 14px; height: 12px; display: block; margin: auto; }
.ctools { flex: none; height: 61px; border-bottom: 1px solid #a9a9a9; background: linear-gradient(#fafafa, #dcdcdc); }
.addr { display: flex; align-items: center; height: 36px; padding: 1px 8px 0 10px; gap: 13px; }
.addr button svg { width: 16px; height: 16px; display: block; }
.url { flex: 1; min-width: 0; height: 28px; margin: 0 -2px 0 -4px; display: flex; align-items: center; gap: 6px; padding: 0 3px 0 8px; background: #fff; border: 1px solid #b4b4b4; border-radius: 2px; font-size: 16px; color: #808080; }
.url b { font-weight: normal; color: #000; }
.urltext { flex: 1; overflow: hidden; white-space: nowrap; }
.marks { display: flex; align-items: center; height: 18px; padding-left: 8px; font: 13px var(--web); white-space: nowrap; }
.marks a { display: flex; align-items: center; gap: 6px; flex: none; }
.marks svg { width: 15px; height: 14px; }
.m1 { width: 95px; }
.m2 { width: 151px; }
.m3 { width: 149px; }
.m4 { width: 133px; }
.m5 { width: 128px; }
.m6 { width: 89px; }
.over { margin: 0 12px 0 auto; }
.view { flex: 1; min-height: 0; display: flex; background: #fff; }
.cscroll { width: 20px; flex: none; background: #f1f1f1; display: flex; flex-direction: column; align-items: center; padding: 9px 0; }
.cscroll svg { width: 7px; height: 4px; flex: none; }
.ctrack { flex: 1; width: 16px; margin: 7px 0; }
.ctrack span { display: block; height: 70%; background: #bcbcbc; border: 1px solid #a8a8a8; }

/* Catalogue page */
.site { flex: 1; min-width: 0; overflow: hidden; padding: 0 8px 0 3px; font: 13px var(--web); color: #333; }
.brand { height: 116px; display: flex; justify-content: space-between; padding: 16px 18px 0 15px; }
.logo { width: 176px; height: 80px; overflow: visible; }
.lg { font: bold 60px var(--web); fill: #333132; }
.sm { font: 6px "Liberation Sans", sans-serif; fill: #333; }
.brand h2 { margin-top: 36px; height: 37px; font-size: 27px; font-weight: bold; line-height: 37px; color: transparent; background: linear-gradient(90deg, #2e1114, #7a333a 60%); background-clip: text; -webkit-box-reflect: below -17px linear-gradient(transparent 20%, rgba(0, 0, 0, .16)); }
.grey { height: 36px; display: flex; align-items: center; justify-content: space-between; padding: 0 31px 0 15px; background: #e4e4e4; }
.links { display: flex; gap: 12px; }
.links a::before { content: "|"; margin-right: 5px; }
.search { height: 54px; margin-top: 1px; padding: 4px 15px 0; border: 1px solid #ccc; line-height: 26px; }
.search p { line-height: 20px; }
.search a[href], .alert a { color: #333; }
.search p a, .alert a, .grid a { text-decoration: underline; text-underline-offset: 2px; }
.search em, .alert em { color: #f00; font-style: normal; }
.search nav { display: flex; }
.search nav a + a::before { content: "|"; color: #ccc; margin: 0 9px; }
.yellow { height: 20px; background: #ffc; border-bottom: 1px solid #666; }
.actions { margin: 56px 0 0 7px; border-spacing: 0; font: bold 11px var(--web); color: #333; table-layout: fixed; }
.actions th { width: 209px; padding: 0 0 0 2px; text-align: left; font: 15px "DejaVu Sans", sans-serif; }
.actions td { padding: 0; height: 19px; text-align: center; background: linear-gradient(#333, #333) 100% 3px / 1px 14px no-repeat; }
.a1 { width: 123px; }
.a2 { width: 130px; }
.a3 { width: 142px; }
.a4 { width: 186px; }
.a5 { width: 121px; }
.results { padding: 43px 46px 0 38px; }
.alert { height: 18px; font: bold 10px/18px var(--web); }
.alert em { font-family: "DejaVu Sans", sans-serif; }
.pager { height: 26px; display: flex; gap: 5px; padding: 0 1px 0 2px; color: #000; }
.pager strong { flex: 1; font-size: 14px; line-height: 26px; white-space: nowrap; }
.pager button { height: 20px; padding: 0 4px; background: #e1e1e1; border: 1px solid #999; font: bold 11px "DejaVu Sans", sans-serif; white-space: nowrap; width: 120px; }
.pager .prev { margin-left: 10px; }
.pager button:first-of-type { width: 140px; }
.pager input { width: 62px; height: 20px; margin-top: 2px; padding: 0; border: 1px solid #000; }
.zig { width: 39px; height: 4px; background: repeating-linear-gradient(90deg, #888 0 3px, transparent 3px 4px); margin: 2px 0 0; }
.grid { width: 910px; border-spacing: 1px; table-layout: fixed; color: #000; line-height: 18px; white-space: nowrap; }
.grid th { height: 20px; padding: 0; background: #ccc; }
.grid td { height: 40px; padding: 1px; vertical-align: top; background: #f4f5f7; font-family: Roboto, sans-serif; }
.grid td:first-child { text-align: center; }
.grid a { color: #333; }
.grid th.n { font-weight: normal; font-size: 14px; }
.grid label { display: block; white-space: normal; text-align: center; line-height: 19px; }
.grid label input { appearance: none; width: 12px; height: 12px; margin: 0; background: linear-gradient(#eee, #d8d8d8); border: 1px solid #a3a3a3; border-radius: 2px; }
.c1 { width: 16px; }
.c2 { width: 57px; }
.c3 { width: 168px; }
.c4 { width: 249px; }
.c5 { width: 44px; }
.c6 { width: 44px; }
.c7 { width: 170px; }
```
